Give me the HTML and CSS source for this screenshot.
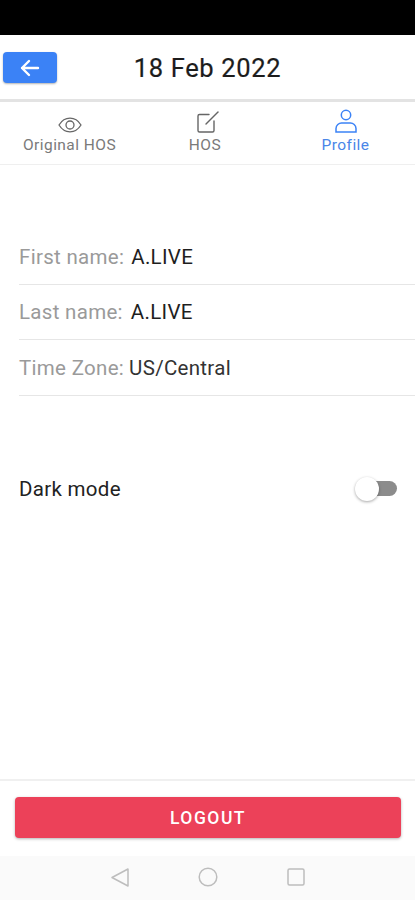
FILE: index.html
```html
<!DOCTYPE html>
<html lang="en">
<head>
<meta charset="utf-8">
<title>Profile</title>
<link rel="stylesheet" href="styles.css">
</head>
<body>
<div class="app">
  <div class="statusbar"></div>
  <header class="header">
    <button class="back" aria-label="Back">
      <svg width="22" height="20" viewBox="0 0 22 20" fill="none" stroke="#fff" stroke-width="2.4" stroke-linecap="round" stroke-linejoin="round"><path d="M19 10H3M10 3L3 10l7 7"/></svg>
    </button>
    <h1 class="title">18 Feb 2022</h1>
  </header>
  <nav class="tabs">
    <div class="tab">
      <svg class="tab-icon" width="24" height="16" viewBox="0 0 24 16" fill="none" stroke="#666" stroke-width="1.3"><path d="M1 8C3.800 3.500 7.500 1.200 12 1.200S20.200 3.500 23 8C20.200 12.500 16.500 14.800 12 14.800S3.800 12.500 1 8Z"/><circle cx="12" cy="8" r="4"/></svg>
      <span>Original HOS</span>
    </div>
    <div class="tab">
      <svg class="tab-icon tab-icon-edit" width="22" height="22" viewBox="0 0 22 22" fill="none" stroke="#666" stroke-width="1.4" stroke-linecap="round" stroke-linejoin="round"><path d="M12 3.500H2.500A1.500 1.500 0 0 0 1 5v14.500A1.500 1.500 0 0 0 2.500 21h13a1.500 1.500 0 0 0 1.500-1.500V10"/><path d="M9 13L21 1"/></svg>
      <span>HOS</span>
    </div>
    <div class="tab tab-active">
      <svg class="tab-icon" width="22" height="24" viewBox="0 0 22 24" fill="none" stroke="#3b82f6" stroke-width="1.500"><circle cx="11" cy="6" r="4.700"/><path d="M1 23v-3.500c0-3.500 3-5.500 5.500-5.500h9c2.500 0 5.500 2 5.500 5.500V23Z"/></svg>
      <span>Profile</span>
    </div>
  </nav>
  <main class="content">
    <div class="row"><span class="label">First name:</span><span class="value">A.LIVE</span></div>
    <div class="row"><span class="label">Last name:</span><span class="value value-last">A.LIVE</span></div>
    <div class="row"><span class="label">Time Zone:</span><span class="value value-tz">US/Central</span></div>
    <div class="setting">
      <span>Dark mode</span>
      <span class="switch"><span class="thumb"></span></span>
    </div>
  </main>
  <div class="footer">
    <button class="logout">LOGOUT</button>
  </div>
  <div class="navbar">
    <svg width="20" height="20" viewBox="0 0 20 20" fill="none" stroke="#bdbdbd" stroke-width="1.500" stroke-linejoin="round"><path d="M18 2V19L2 10.500Z"/></svg>
    <svg width="20" height="20" viewBox="0 0 20 20" fill="none" stroke="#bdbdbd" stroke-width="1.500"><circle cx="10" cy="10" r="8.800"/></svg>
    <svg width="20" height="20" viewBox="0 0 20 20" fill="none" stroke="#bdbdbd" stroke-width="1.500"><rect x="2" y="2" width="16" height="16" rx="1.500"/></svg>
  </div>
</div>
</body>
</html>
```
FILE: styles.css
```css
* { box-sizing: border-box; }
html, body { margin: 0; height: 100%; }
body { font-family: Roboto, "Liberation Sans", sans-serif; background: #fff; color: #1a1a1a; }
.app { display: flex; flex-direction: column; height: 900px; width: 415px; overflow: hidden; }
.statusbar { height: 35px; background: #000; flex: none; }
.header { height: 67px; flex: none; display: flex; align-items: center; padding: 1px 0 0 3px; border-bottom: 3px solid #e3e3e3; background: #fff; }
.back { flex: none; width: 54px; height: 31px; background: #3b82f6; border: 0; border-radius: 4px; display: flex; align-items: center; justify-content: center; padding: 0; box-shadow: 0 1px 2px rgba(0,0,0,.3); }
.title { flex: 1; margin: 0; padding-right: 57px; text-align: center; font-size: 25.500px; line-height: 32px; font-weight: 400; letter-spacing: .65px; color: #1c1c1c; -webkit-text-stroke: .2px #1c1c1c; }
.tabs { height: 63px; flex: none; display: grid; grid-template-columns: 139px 132px 144px; border-bottom: 1px solid #efefef; }
.tab { display: flex; flex-direction: column; align-items: center; justify-content: flex-end; font-size: 15.500px; line-height: 17px; letter-spacing: .45px; color: #7a7a7a; padding-bottom: 10px; }
.tab-icon { display: block; margin-bottom: 4px; }
.tab-icon-edit { margin-left: 5px; }
.tab-active { color: #4a86e8; padding-left: 5px; }
.content { flex: 1; padding: 64px 0 0 19px; }
.row { height: 55.500px; padding-top: 1px; display: flex; align-items: center; font-size: 20.500px; letter-spacing: .3px; border-bottom: 1px solid #e6e6e6; }
.label { color: #9a9a9a; margin-right: 7px; }
.value { color: #1e1e1e; }
.value-last { margin-left: 1px; }
.value-tz { margin-left: -2px; color: #333; }
.setting { display: flex; align-items: center; justify-content: space-between; margin-top: 73px; padding-right: 18px; height: 40px; font-size: 20.500px; letter-spacing: .3px; color: #222; }
.switch { display: block; position: relative; width: 36px; height: 15px; border-radius: 8px; background: #8c8c8c; }
.thumb { position: absolute; left: -6px; top: -4px; width: 24px; height: 24px; border-radius: 50%; background: #fff; box-shadow: 0 1px 3px rgba(0,0,0,.35); }
.footer { height: 77px; flex: none; border-top: 2px solid #f0f0f0; padding: 16px 14px 0 15px; }
.logout { display: block; width: 100%; height: 41px; border: 0; border-radius: 4px; background: #ec4159; color: #fff; font-family: inherit; font-size: 17.500px; font-weight: 500; letter-spacing: 1.500px; box-shadow: 0 1px 3px rgba(0,0,0,.3); padding: 0; }
.navbar { height: 44px; flex: none; background: #fafafa; display: flex; align-items: center; justify-content: center; gap: 68px; padding-bottom: 2px; }
```
